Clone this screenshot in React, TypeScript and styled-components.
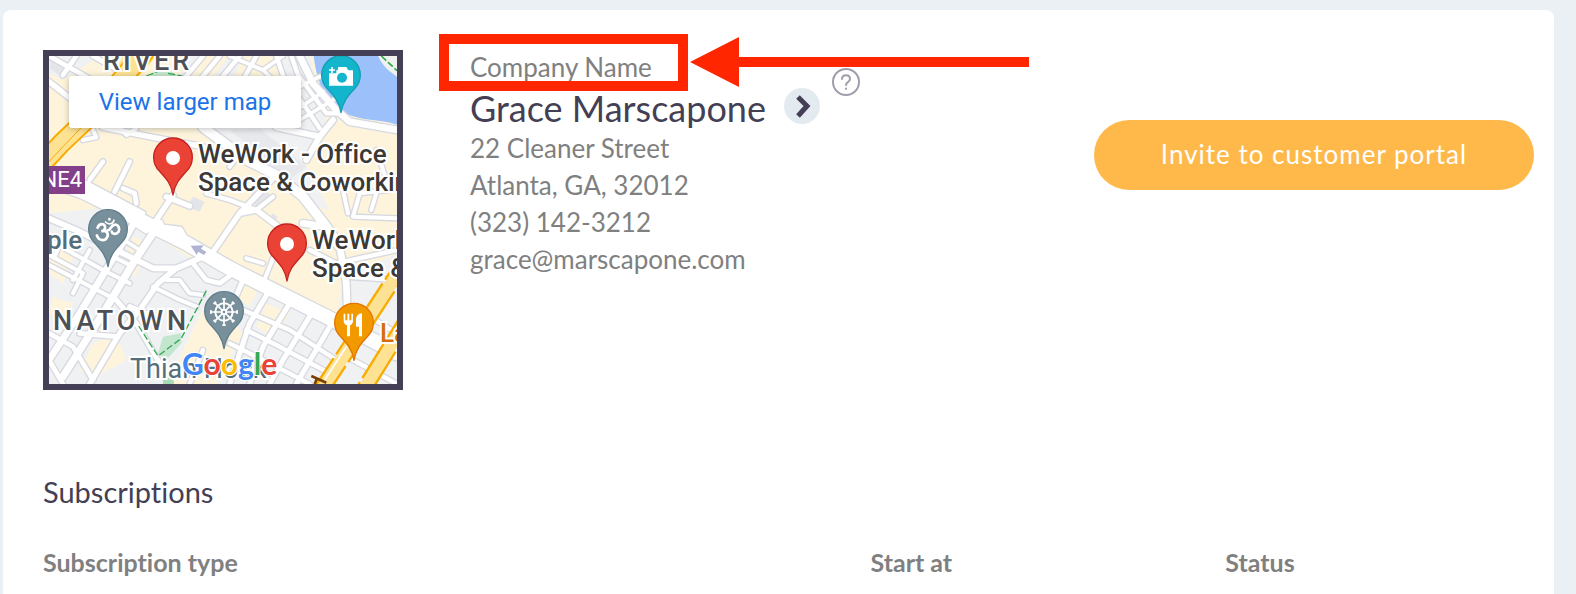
import React from 'react';
import styled, { createGlobalStyle } from 'styled-components';

const ink = '#443f54';
const grey = '#808080';
const alert = '#ff2600';

const GlobalStyle = createGlobalStyle`
  * { box-sizing: border-box; }
  html { background: #eaf0f4; }
  body {
    margin: 0;
    font-family: Lato, "Liberation Sans", sans-serif;
    font-variant-ligatures: none;
    color: ${grey};
  }
`;

const Page = styled.div`
  min-height: 100vh;
  display: flex;
  padding: 10px 22px 0 3px;
`;

const Card = styled.main`
  flex: 1;
  min-width: 0;
  padding: 39px 20px 0 40px;
  background: #fff;
  border-radius: 8px 8px 0 0;
`;

const Customer = styled.section`
  display: flex;
  align-items: flex-start;
`;

const MapFrame = styled.div`
  position: relative;
  flex: none;
  width: 360px;
  height: 340px;
  margin: 1px 67px 0 0;
  border: 6px solid ${ink};
  overflow: hidden;
  font-family: Roboto, sans-serif;
`;

const MapDrawing = styled.svg`
  display: block;
  width: 100%;
  height: 100%;
`;

const MapLabel = styled.div<{ $x: number; $y: number; $size?: number; $color?: string; $track?: number; $weight?: number }>`
  position: absolute;
  left: ${p => p.$x}px;
  top: ${p => p.$y}px;
  color: ${p => p.$color ?? '#3c3833'};
  font-size: ${p => p.$size ?? 26}px;
  font-weight: ${p => p.$weight ?? 500};
  line-height: 28px;
  letter-spacing: ${p => p.$track ?? 0}px;
  white-space: pre;
  -webkit-text-stroke: 4px #fff;
  paint-order: stroke fill;
`;

const RoadBadge = styled.div`
  position: absolute;
  left: 0;
  top: 110px;
  width: 36px;
  height: 28px;
  background: #833f88;
  color: #fff;
  font-size: 22px;
  line-height: 28px;
  display: flex;
  justify-content: flex-end;
  padding-right: 3px;
  overflow: hidden;
`;

const MapLink = styled.a`
  position: absolute;
  left: 20px;
  top: 20px;
  width: 232px;
  height: 52px;
  display: grid;
  place-items: center;
  background: #fff;
  border-radius: 3px;
  box-shadow: 0 1px 6px rgba(0, 0, 0, 0.25);
  color: #1a73e8;
  font-size: 24px;
  text-decoration: none;
`;

const Logo = styled(MapLabel)`
  font-family: Lato, sans-serif;
  -webkit-text-stroke-width: 2px;
`;

const Tint = styled.span<{ $c: string }>`
  color: ${p => p.$c};
`;

const Info = styled.div`
  position: relative;
  flex: 1;
  min-width: 0;
`;

const Line = styled.div`
  font-size: 26px;
  line-height: 37px;
  white-space: nowrap;
`;

const NameRow = styled.div`
  display: flex;
  align-items: center;
  height: 44px;
`;

const Name = styled.h1`
  margin: 0 18px 0 0;
  font-size: 36px;
  font-weight: 400;
  line-height: 44px;
  color: ${ink};
  white-space: nowrap;
`;

const RoundButton = styled.button`
  width: 36px;
  height: 36px;
  margin: 0 12px 4px 0;
  padding: 0;
  border: 0;
  border-radius: 50%;
  background: #e3ebf0;
`;

const HelpButton = styled.button`
  align-self: flex-start;
  width: 28px;
  height: 28px;
  margin-top: -18px;
  padding: 0;
  border: 0;
  background: none;
`;

const Glyph = styled.svg`
  display: block;
`;

const Highlight = styled.div`
  position: absolute;
  left: -31px;
  top: -15px;
  width: 249px;
  height: 57px;
  border: 10px solid ${alert};
`;

const Arrow = styled.svg`
  position: absolute;
  left: 220px;
  top: -13px;
`;

const Invite = styled.button`
  flex: none;
  width: 440px;
  height: 70px;
  margin-top: 71px;
  padding: 0 0 3px;
  border: 0;
  border-radius: 35px;
  background: #ffb94a;
  color: #fff;
  font: 400 26px Lato, sans-serif;
  letter-spacing: 1px;
`;

const Title = styled.h2`
  margin: 80px 0 28px;
  font-size: 29px;
  font-weight: 400;
  line-height: 44px;
  color: ${ink};
`;

const Table = styled.table`
  width: 100%;
  border-collapse: collapse;
  table-layout: fixed;
`;

const HeadCell = styled.th<{ $w?: string }>`
  width: ${p => p.$w ?? 'auto'};
  padding: 0;
  text-align: left;
  font-size: 25px;
  font-weight: 700;
  line-height: 40px;
`;

const pinShape = 'M0 113C-5 80-20 64-40 42A58 58 0 1 1 40 42C20 64 5 80 0 113Z';

const Pin = ({ x, y, fill, edge, children }: { x: number; y: number; fill: string; edge: string; children: React.ReactNode }) => (
  <g transform={`translate(${x} ${y})`}>
    <path d={pinShape} fill={fill} stroke={edge} strokeWidth="4" strokeLinejoin="round" />
    {children}
  </g>
);

const roads: [string, number][] = [
  // streets north of the main road
  ['M18 95L120 175L180 232L330 262L480 290', 16],
  ['M18 18L200 120M100 18L60 75M150 18L260 80', 14],
  ['M480 18L420 90M530 18L470 90M590 18L530 90M640 18L600 90', 13],
  ['M560 18L660 60L720 18M660 60L690 90', 11],
  ['M700 18L725 90L790 175L830 235M745 18L765 75L850 190L895 190', 13],
  ['M770 110L830 80M775 170L840 125M770 210L870 150', 11],
  ['M770 18L810 100L880 180L920 215L1062 240', 20],
  ['M230 232L250 255L280 235M150 240L160 262L120 270', 12],
  ['M180 335L140 390M260 335L215 425M240 415L275 430L280 460', 14],
  ['M390 435L330 525M370 440L440 468', 16],
  ['M480 232L620 335L700 375L780 440L850 530L890 590', 28],
  ['M700 232L830 260L870 210M830 260L790 330', 18],
  ['M700 375L590 490L500 620M590 490L640 480L720 540', 16],
  ['M600 300L560 350M690 440L640 480L560 450L490 430', 13],
  ['M1000 300L1040 420L950 430L930 500L1062 505M1000 430L985 480M900 420L915 490', 12],
  ['M850 530L780 520M890 590L910 700L912 760', 20],
  ['M800 600L880 640L1062 600M910 680L1062 690', 13],
  ['M700 600L660 700M660 640L610 625', 12],
  // streets around Chinatown
  ['M18 505L110 545L330 655L400 655L500 612', 17],
  ['M18 570L180 660L260 700M18 645L220 750', 12],
  ['M18 615L120 670L90 730M60 560L35 620M140 600L90 690', 12],
  ['M290 490L250 560L110 790L18 930', 20],
  ['M350 520L270 640L180 790L60 980', 22],
  ['M400 655L345 700L290 780L230 850L140 1002', 16],
  ['M240 500L310 545M220 555L290 600M190 610L260 645', 11],
  ['M370 690L410 690L440 730L480 735M330 710L400 745L460 770', 12],
  ['M450 640L490 690L530 700L570 670', 14],
  ['M18 850L90 890L150 990M18 930L60 1002M110 850L220 860', 14],
  ['M220 750L280 820L350 940L380 1002M260 770L330 800', 15],
  ['M600 690L570 760M680 720L620 820L560 1002M740 760L660 890L620 1002', 15],
  ['M600 780L740 840L880 930M610 840L700 885L850 965', 13],
  ['M800 800L720 930L680 1002M860 830L790 950L760 1002', 15],
  ['M560 880L700 950L800 1002M480 900L440 1002', 13],
  ['M930 930L1062 1002M980 800L1062 850M960 840L1062 890', 13],
  // main road
  ['M18 355L130 400L300 490', 14],
  ['M370 535L410 540L430 575', 20],
  ['M18 390L120 425L220 475L330 530L430 580L560 655L700 725L860 805L1062 910', 42],
];

const leftHighway = 'M-10 350L55 280L150 190L310 0';
const rightHighways = ['M1110 600L835 1020', 'M1110 780L955 1030'];

const StreetMap = () => (
  <MapDrawing viewBox="18 18 1044 984" preserveAspectRatio="none" aria-hidden="true">
    <rect x="18" y="18" width="1044" height="984" fill="#fdf4db" />
    <g fill="#eff1f3">
      <path d="M18 18H170L60 90L18 70ZM440 18H800L850 210L780 330L860 480L780 460L680 370L480 235H300L420 60Z" />
      <path d="M18 490L220 470L340 560L450 630L620 690L860 820L1062 930V1002H18Z" />
      <path d="M900 690L1062 610V900L880 810Z" />
    </g>
    <g fill="#e3e5e9">
      <path d="M25 25L60 32L80 65L60 85L20 55ZM450 440L485 455L470 485L430 470ZM690 490L705 502L690 515L678 505ZM640 400L690 440L650 480L620 450Z" />
      <path d="M560 240L650 235L790 350L740 390Z" opacity=".6" />
    </g>
    <g fill="#fdf4db">
      <path d="M18 560L100 600L60 700L18 670ZM270 560L320 580L290 640L250 615ZM265 635L290 650L275 680L250 665ZM150 880L220 855L250 930L150 985L110 960Z" />
      <path d="M500 735L600 850L520 1002H370L430 880ZM600 690L650 710L620 770L580 740ZM670 760L740 790L690 860L640 830ZM30 740L90 760L60 800L18 790Z" />
      <path d="M480 18H560L500 90H430ZM600 18H700L720 90H570Z" />
    </g>
    <path d="M812 18C822 100 850 165 905 190C950 212 1010 208 1062 224V18Z" fill="#9cc0fa" />
    <path d="M1005 18C1020 50 1040 65 1062 80V18Z" fill="#eef1ee" />
    <path d="M1015 18L1062 62" stroke="#34a853" strokeWidth="5" strokeDasharray="20 7" />
    <path d="M350 40L400 75L470 85V110H300Z" fill="#c5e8d0" />
    <path d="M310 78L350 62M375 70L440 82" stroke="#34a853" strokeWidth="4" strokeDasharray="22 7" />
    <path d="M240 18H340L290 78H210Z" fill="#fde293" />
    <path d="M360 860L415 850L415 880L370 930L345 910Z" fill="#c3e6cf" />
    <g fill="none" strokeLinecap="round" strokeLinejoin="round">
      {roads.map(([d, w]) => <path key={d} d={d} stroke="#d7d9e0" strokeWidth={w + 8} />)}
      {roads.map(([d, w]) => <path key={d} d={d} stroke="#fff" strokeWidth={w} />)}
      <path d={leftHighway} stroke="#f9ab00" strokeWidth="62" />
      <path d={leftHighway} stroke="#fde293" strokeWidth="50" />
      {rightHighways.map(d => <path key={d} d={d} stroke="#f9ab00" strokeWidth="50" strokeDasharray="120 14" strokeLinecap="butt" />)}
      {rightHighways.map(d => <path key={d} d={d} stroke="#fde293" strokeWidth="36" />)}
      <path d="M-10 365L62 288L160 185" stroke="#f9ab00" strokeWidth="3" />
      <path d="M910 890L845 990" stroke="#fff" strokeWidth="5" />
    </g>
    <path d="M490 722L415 865L345 918L285 825" fill="none" stroke="#34a853" strokeWidth="4" strokeDasharray="20 8" />
    <path d="M360 1002V975H392V1002Z" fill="#a8dab5" />
    <path d="M805 978L850 998M815 1002L822 985" stroke="#7b3f00" strokeWidth="8" />
    <path d="M443 587L482 586L474 596L490 606L483 615L466 605L461 614Z" fill="#b0b3d1" />

    <Pin x={390} y={322} fill="#ea4335" edge="#c5221f"><circle r="21" cy="2" fill="#fff" /></Pin>
    <Pin x={732} y={580} fill="#ea4335" edge="#c5221f"><circle r="21" cy="2" fill="#fff" /></Pin>
    <Pin x={894} y={75} fill="#12b5cb" edge="#129eaf">
      <path d="M-14-14V-5H-36V32H36V-14H22L16-24H-8L-10-14Z" fill="#fff" />
      <circle cx="3" cy="8" r="15" fill="#12b5cb" />
      <path d="M-27-24V-6M-36-15H-18" stroke="#fff" strokeWidth="5" />
    </Pin>
    <Pin x={195} y={537} fill="#78909c" edge="#607d8b">
      <g fill="none" stroke="#fff" strokeWidth="8" strokeLinecap="round" transform="translate(0 4) rotate(-12)">
        <path d="M-29-14C-20-28-3-22-7-9C-9-3-15-1-20-1C-4-3 1 10-7 20C-17 32-34 24-36 8M-6 0C6 5 8-9 20-12C34-14 37 2 30 11C23 18 10 15 10 6" />
        <path d="M-2-26C5-15 18-15 24-26" strokeWidth="5" />
        <path d="M11-32V-31" />
      </g>
    </Pin>
    <Pin x={543} y={783} fill="#78909c" edge="#607d8b">
      <g fill="none" stroke="#fff" strokeWidth="6" transform="translate(0 3)">
        <circle r="26" />
        <circle r="7" />
        {[0, 45, 90, 135].map(a => (
          <g key={a} transform={`rotate(${a})`}>
            <path d="M0-38V-7M0 7V38" strokeWidth="5" />
            <path d="M-5-39H5M-5 39H5" strokeWidth="6" />
          </g>
        ))}
      </g>
    </Pin>
    <Pin x={933} y={818} fill="#f29900" edge="#e37400">
      <path d="M-31-27H-26V-7H-20V-27H-14V-7H-8V-27H-3V-6C-3 2-7 6-12 8V41H-21V8C-27 6-31 2-31-6ZM24-28V41H15V12H6V-8C6-20 13-27 24-28Z" fill="#fff" />
    </Pin>
  </MapDrawing>
);

const headings: [string, string?][] = [['Subscription type', '55.5%'], ['Start at', '23.8%'], ['Status']];

export default function App() {
  return (
    <>
      <GlobalStyle />
      <Page>
        <Card>
          <Customer>
            <MapFrame>
              <StreetMap />
              <MapLabel $x={54} $y={-9} $size={27} $track={3} $color="#4d5156">RIVER</MapLabel>
              <MapLabel $x={149} $y={84}>{'WeWork - Office\nSpace & Coworking'}</MapLabel>
              <MapLabel $x={263} $y={170}>{'WeWork\nSpace &'}</MapLabel>
              <MapLabel $x={-2} $y={170} $color="#546e7a">ple</MapLabel>
              <MapLabel $x={4} $y={251} $size={27} $track={4} $color="#4d5156">NATOWN</MapLabel>
              <MapLabel $x={81} $y={299} $size={27} $weight={400} $color="#546e7a">Thian Hock</MapLabel>
              <MapLabel $x={331} $y={263} $color="#d56e0c">La</MapLabel>
              <RoadBadge>NE4</RoadBadge>
              <Logo $x={133} $y={293} $size={30} $weight={700}>
                <Tint $c="#4285f4">G</Tint><Tint $c="#ea4335">o</Tint><Tint $c="#fbbc04">o</Tint>
                <Tint $c="#4285f4">g</Tint><Tint $c="#34a853">l</Tint><Tint $c="#ea4335">e</Tint>
              </Logo>
              <MapLink href="#map">View larger map</MapLink>
            </MapFrame>

            <Info>
              <Line>Company Name</Line>
              <NameRow>
                <Name>Grace Marscapone</Name>
                <RoundButton aria-label="Open customer">
                  <Glyph width="36" height="36" viewBox="0 0 36 36">
                    <path d="M14 9L23 18L14 28" fill="none" stroke={ink} strokeWidth="5" />
                  </Glyph>
                </RoundButton>
                <HelpButton aria-label="Help">
                  <Glyph width="28" height="28" viewBox="0 0 28 28" fill="none" stroke="#a09dac" strokeWidth="2" strokeLinecap="round">
                    <circle cx="14" cy="14" r="13" />
                    <path d="M10 11C10 6 18 6 18 11C18 14 14 14 14 17M14 20.500V21" />
                  </Glyph>
                </HelpButton>
              </NameRow>
              <Line>22 Cleaner Street</Line>
              <Line>Atlanta, GA, 32012</Line>
              <Line>(323) 142-3212</Line>
              <Line>grace@marscapone.com</Line>
              <Highlight />
              <Arrow width="340" height="52" viewBox="0 0 340 52" aria-hidden="true">
                <path d="M0 26L49 1V21H339V31H49V51Z" fill={alert} />
              </Arrow>
            </Info>

            <Invite>Invite to customer portal</Invite>
          </Customer>

          <Title>Subscriptions</Title>
          <Table>
            <thead>
              <tr>
                {headings.map(([text, width]) => <HeadCell key={text} $w={width} scope="col">{text}</HeadCell>)}
              </tr>
            </thead>
          </Table>
        </Card>
      </Page>
    </>
  );
}
